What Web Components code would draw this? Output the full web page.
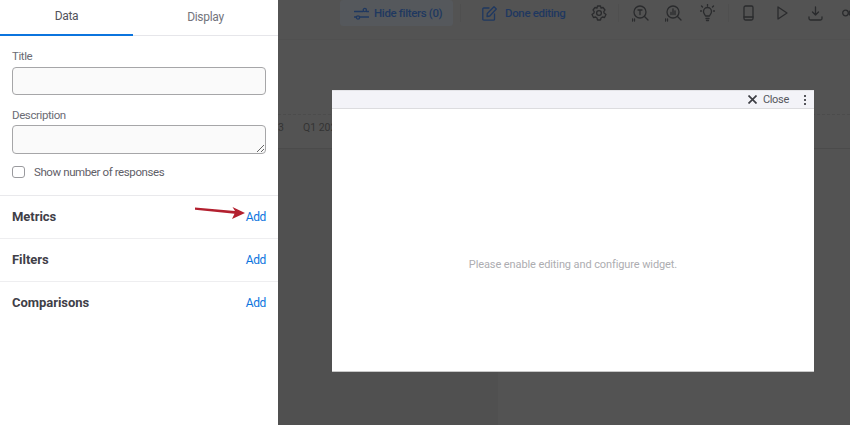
<!DOCTYPE html>
<html>
<head>
<meta charset="utf-8">
<style>
  html, body { margin: 0; height: 100%; overflow: hidden; background: #515151; }
  body { font-family: Roboto, "Liberation Sans", sans-serif; }
  editor-page { height: 425px; }
</style>
</head>
<body>
<editor-page>
  <side-panel slot="panel">
    <panel-section label="Metrics" arrow></panel-section>
    <panel-section label="Filters"></panel-section>
    <panel-section label="Comparisons" last></panel-section>
  </side-panel>
  <dash-toolbar slot="stage"></dash-toolbar>
  <widget-dialog slot="stage">Please enable editing and configure widget.</widget-dialog>
</editor-page>

<script>
// Page frame
class EditorPage extends HTMLElement {
  constructor() {
    super();
    this.attachShadow({ mode: 'open' });
  }
  connectedCallback() {
    this.shadowRoot.innerHTML = `
      <style>
        :host { display: grid; grid-template-columns: 278px 1fr; width: 850px; }
        .stage { display: block; position: relative; overflow: hidden; background: #535353; min-width: 0; }
      </style>
      <slot name="panel"></slot>
      <div class="stage"><slot name="stage"></slot></div>
    `;
  }
}
customElements.define('editor-page', EditorPage);

// Left panel with tabs and form
class SidePanel extends HTMLElement {
  constructor() {
    super();
    this.attachShadow({ mode: 'open' });
  }
  connectedCallback() {
    this.shadowRoot.innerHTML = `
      <style>
        :host { display: block; background: #fff; color: #5f6068; font-size: 11.5px; letter-spacing: -0.4px; height: 425px; }
        .tabs { display: grid; grid-template-columns: 133px 1fr; height: 36px; box-sizing: border-box; border-bottom: 1px solid #e6e6ea; }
        .tab { display: flex; align-items: center; justify-content: center; padding-bottom: 3px; height: 36px; box-sizing: border-box; color: #73747c; font-size: 12px; letter-spacing: -0.3px; }
        .tab.on { border-bottom: 2px solid #0b74de; color: #52535b; }
        form { display: flex; flex-direction: column; margin: 0; padding: 13px 12px 0; height: 160px; box-sizing: border-box; border-bottom: 1px solid #e9e9ec; }
        label { line-height: 14px; color: #6b6c74; }
        .box { display: block; box-sizing: border-box; width: 254px; background: #fafafa; border: 1px solid #a6a6a8; border-radius: 4px; padding: 0; }
        input.box { height: 28px; margin: 4px 0 13px; }
        textarea.box { height: 29px; margin: 3px 0 11px; }
        .check { display: flex; align-items: center; gap: 9px; color: #5f6068; line-height: 14px; }
        .tick { width: 11px; height: 10px; border: 1px solid #9a9a9e; border-radius: 3px; }
      </style>
      <div class="tabs">
        <div class="tab on">Data</div>
        <div class="tab">Display</div>
      </div>
      <form>
        <label>Title</label>
        <input class="box">
        <label>Description</label>
        <textarea class="box"></textarea>
        <div class="check"><span class="tick"></span>Show number of responses</div>
      </form>
      <slot></slot>
    `;
  }
}
customElements.define('side-panel', SidePanel);

// Metrics / Filters / Comparisons rows
class PanelSection extends HTMLElement {
  constructor() {
    super();
    this.attachShadow({ mode: 'open' });
  }
  connectedCallback() {
    const arrow = this.hasAttribute('arrow') ? `
      <svg class="arrow" width="54" height="14" viewBox="0 0 54 14">
        <path d="M1 0.500 L41 4 L38.500 0 L51 6 L38 12 L40.500 6.800 L1 2.800 Z" fill="#b3202f"/>
      </svg>` : '';
    const line = this.hasAttribute('last') ? 'none' : '1px solid #eeeef0';
    this.shadowRoot.innerHTML = `
      <style>
        :host { display: block; }
        .row { position: relative; display: flex; justify-content: space-between; align-items: center; height: 43px; box-sizing: border-box; padding: 0 12px; border-bottom: ${line}; }
        b { font-size: 13px; font-weight: 700; color: #3f4048; letter-spacing: -0.03px; margin-bottom: 2px; }
        a { color: #0b74de; font-size: 12px; letter-spacing: -0.35px; margin-bottom: 1px; }
        .arrow { position: absolute; left: 194px; top: 11px; }
      </style>
      <div class="row"><b>${this.getAttribute('label')}</b><a>Add</a>${arrow}</div>
    `;
  }
}
customElements.define('panel-section', PanelSection);

// Dimmed dashboard toolbar behind the dialog
class DashToolbar extends HTMLElement {
  constructor() {
    super();
    this.attachShadow({ mode: 'open' });
  }
  connectedCallback() {
    this.shadowRoot.innerHTML = `
      <style>
        :host { display: flex; flex-direction: column; height: 425px; color: #1f3860; font-size: 11.5px; font-weight: 500; letter-spacing: -0.35px; }
        .bar { display: flex; align-items: center; height: 40px; padding: 0 0 13px 62px; box-sizing: border-box; white-space: nowrap; border-bottom: 1px solid #505050; flex: none; }
        .btn { display: flex; align-items: center; gap: 5px; width: 113px; height: 26px; padding-left: 14px; box-sizing: border-box; background: #55585c; border-radius: 3px; flex: none; }
        .done { display: flex; align-items: center; gap: 8px; margin-left: 21px; width: 101px; flex: none; }
        .sep { width: 1px; height: 18px; background: #4f4f4f; flex: none; margin-left: 7px; }
        svg { fill: none; stroke: #2a2b2d; stroke-width: 1.300; stroke-linecap: round; stroke-linejoin: round; flex: none; }
        svg.blue { stroke: #1f3860; }
        .slot { display: flex; justify-content: center; flex: none; width: 33.500px; }
        .dash { height: 75px; border-bottom: 1px dashed #4c4c4c; box-sizing: border-box; flex: none; }
        .tabs { height: 34px; display: flex; align-items: center; padding-bottom: 8px; gap: 19px; color: #333; font-size: 10.500px; font-weight: 400; letter-spacing: 0; border-bottom: 1px solid #4b4b4b; box-sizing: border-box; flex: none; white-space: nowrap; }
        .low { flex: 1; display: grid; grid-template-columns: 220px 1fr; }
        .low div { background: #505050; }
      </style>
      <div class="bar">
        <div class="btn">
          <svg class="blue" width="15" height="13" viewBox="0 0 15 13"><path d="M0.500 4.500H9M12.500 4.500H14.500M0.500 10H2.500M5.500 10H14.500"/><circle cx="10.800" cy="3" r="1.600"/><circle cx="4" cy="10.500" r="1.600"/></svg>
          <span>Hide filters (0)</span>
        </div>
        <div class="sep"></div>
        <div class="done">
          <svg class="blue" width="15" height="15" viewBox="0 0 15 15"><path d="M7 2H1.800A1 1 0 0 0 0.800 3V13.200A1 1 0 0 0 1.800 14.200H11.500A1 1 0 0 0 12.500 13.200V8"/><path d="M5 10.500L5.300 7.500L12 0.800L14.300 3L7.800 10Z"/></svg>
          <span>Done editing</span>
        </div>
        <div class="slot" style="width:31px"><svg width="16" height="16" viewBox="0 0 16 16"><path d="M6.500 1H9.500L10 3L12 2.500L14 5L12.800 6.700L13 8L15 9.500L13.500 12.500L11.500 12L10 13L9.500 15H6.500L6 13L4.500 12L2.500 12.500L1 9.500L3 8L3.200 6.700L2 5L4 2.500L6 3Z"/><circle cx="8" cy="8" r="2.400"/></svg></div>
        <div class="sep" style="margin-left:4px;margin-right:4.500px"></div>
        <div class="slot"><svg width="17" height="17" viewBox="0 0 17 17"><circle cx="8" cy="7" r="6"/><path d="M12.500 11.500L16 15M6 5H10M8 5V9.500M0.500 14V16M2.500 14V16"/></svg></div>
        <div class="slot"><svg width="17" height="17" viewBox="0 0 17 17"><circle cx="8" cy="7" r="6"/><path d="M12.500 11.500L16 15M6 9.500V7.500M8 9.500V4M10 9.500V6M0.500 14V16M2.500 14V16"/></svg></div>
        <div class="slot"><svg width="15" height="18" viewBox="0 0 15 18"><path d="M5.500 12C4.500 10 3.500 9.500 3.500 7.500A4 4 0 0 1 11.500 7.500C11.500 9.500 10.500 10 9.500 12ZM6 14.500H9M6.500 16.500H8.500M7.500 0.500V2M1.500 2L2.500 3M13.500 2L12.500 3M0.500 7H1.500M13.500 7H14.500"/></svg></div>
        <div class="sep" style="margin-left:3.500px;margin-right:3.500px"></div>
        <div class="slot"><svg width="11" height="16" viewBox="0 0 11 16"><rect x="1" y="1" width="9" height="14" rx="1.500"/><path d="M1 12H10"/></svg></div>
        <div class="slot"><svg width="11" height="14" viewBox="0 0 11 14"><path d="M1 1L10 7L1 13Z"/></svg></div>
        <div class="slot"><svg width="15" height="15" viewBox="0 0 15 15"><path d="M7.500 1V9M4.500 6L7.500 9L10.500 6M1 11V12.500Q1 14 2.500 14H12.500Q14 14 14 12.500V11"/></svg></div>
        <div class="slot"><svg width="14" height="10" viewBox="0 0 14 10"><circle cx="3.500" cy="5" r="2.800"/><circle cx="10" cy="5" r="2.800"/></svg></div>
      </div>
      <div class="dash"></div>
      <div class="tabs"><span>3</span><span>Q1 2023</span></div>
      <div class="low"><div></div></div>
    `;
  }
}
customElements.define('dash-toolbar', DashToolbar);

// Widget preview dialog
class WidgetDialog extends HTMLElement {
  constructor() {
    super();
    this.attachShadow({ mode: 'open' });
  }
  connectedCallback() {
    this.shadowRoot.innerHTML = `
      <style>
        :host { display: flex; flex-direction: column; position: absolute; left: 54px; top: 90px; width: 482px; height: 282px; background: #fff; border-bottom: 1px solid #c8c8c8; box-sizing: border-box; }
        .head { display: flex; align-items: center; justify-content: flex-end; height: 19px; background: #f3f3f8; border-bottom: 1px solid #dcdcdf; border-top: 1px solid #e4e4e8; flex: none; color: #55565c; font-size: 11px; letter-spacing: -0.3px; gap: 6px; padding-right: 8px; box-sizing: border-box; }
        .dots { display: flex; flex-direction: column; gap: 2px; margin-left: 9px; }
        .dots i { display: block; width: 2px; height: 2px; background: #55565c; }
        .body { flex: 1; display: flex; align-items: center; justify-content: center; color: #adadb1; font-size: 11px; letter-spacing: -0.1px; padding-top: 48px; }
      </style>
      <div class="head">
        <svg width="9" height="9" viewBox="0 0 9 9"><path d="M0.500 0.500L8.500 8.500M8.500 0.500L0.500 8.500" stroke="#3d3e44" stroke-width="1.700"/></svg>
        <span>Close</span>
        <div class="dots"><i></i><i></i><i></i></div>
      </div>
      <div class="body"><slot></slot></div>
    `;
  }
}
customElements.define('widget-dialog', WidgetDialog);
</script>
</body>
</html>
